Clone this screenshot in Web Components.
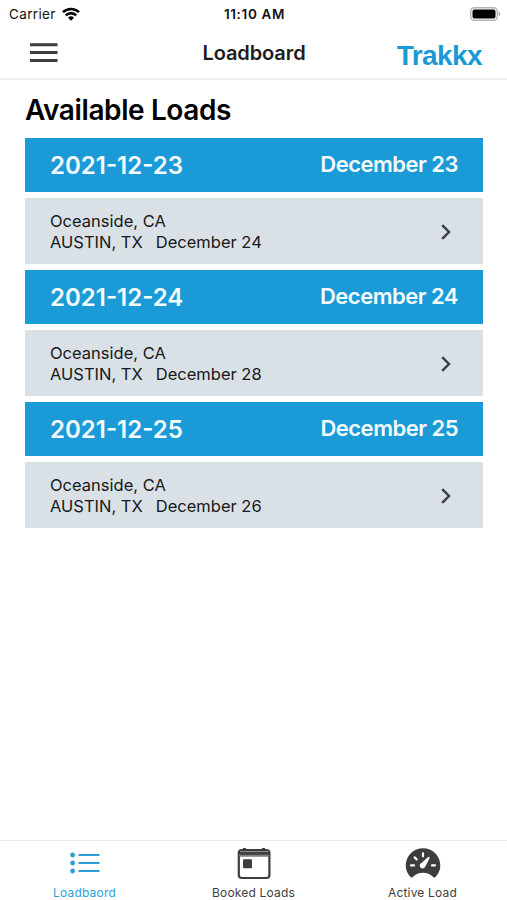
<!DOCTYPE html>
<html lang="en">
<head>
<meta charset="utf-8">
<meta name="viewport" content="width=device-width, initial-scale=1">
<title>Loadboard</title>
<style>
	html, body {
		margin: 0;
		height: 100%;
		background: #fff;
		overflow: hidden;
	}
</style>
</head>
<body>
<trakkx-app></trakkx-app>

<script>
class StatusBar extends HTMLElement {
	constructor() {
		super();
		this.attachShadow({ mode: "open" });
	}

	connectedCallback() {
		this.shadowRoot.innerHTML = `
			<style>
				:host {
					display: grid;
					grid-template-columns: 1fr auto 1fr;
					align-items: center;
					height: 27px;
					padding: 0 6px 1px 9px;
					font-size: 13.5px;
					color: #111;
				}
				.carrier { display: flex; align-items: center; gap: 6px; letter-spacing: 0.35px; }
				.time { font-weight: 600; letter-spacing: 0.65px; padding-right: 1px; }
				.battery { justify-self: end; }
				svg { display: block; }
			</style>
			<div class="carrier">
				<span>Carrier</span>
				<svg width="18" height="14" viewBox="0 0 18 14" fill="none" stroke="#000" stroke-width="2.5">
					<path d="M1 5.2a11.4 11.4 0 0 1 16 0M3.8 8.4a7.4 7.4 0 0 1 10.4 0" />
					<path d="M9 13.800l-3-3.100a4.300 4.300 0 0 1 6 0z" fill="#000" stroke="none" />
				</svg>
			</div>
			<div class="time">11:10 AM</div>
			<svg class="battery" width="31" height="14" viewBox="0 0 31 14">
				<rect x="0.7" y="0.7" width="26.6" height="12.6" rx="3.8" fill="#fff" stroke="#b3b3b3" stroke-width="1.4" />
				<rect x="2.5" y="2.5" width="23" height="9" rx="2" />
				<path d="M28.6 4.8q1.8.6 1.8 2.2t-1.8 2.2z" fill="#aaa" />
			</svg>
		`;
	}
}

class NavBar extends HTMLElement {
	constructor() {
		super();
		this.attachShadow({ mode: "open" });
	}

	connectedCallback() {
		this.shadowRoot.innerHTML = `
			<style>
				:host {
					display: grid;
					grid-template-columns: 1fr auto 1fr;
					align-items: center;
					height: 50px;
					padding: 0 25px 0 30px;
					border-bottom: 2px solid #ececec;
				}
				svg { display: block; }
				.title {
					font-size: 20px;
					font-weight: 600;
					letter-spacing: -0.1px;
					color: #1c1c1e;
					padding-right: 4px;
				}
				.brand {
					justify-self: end;
					font: bold 28px/32px "Liberation Sans", Arial, sans-serif;
					letter-spacing: -0.6px;
					color: #1a99d5;
					padding-top: 6px;
				}
			</style>
			<svg width="28" height="20" viewBox="0 0 28 20" fill="#3c3c3c">
				<path d="M0 .2h27.500v3h-27.500zM0 8.100h27.500v3h-27.500zM0 16h27.500v3h-27.500z" />
			</svg>
			<div class="title"><slot></slot></div>
			<div class="brand">Trakkx</div>
		`;
	}
}

class LoadGroup extends HTMLElement {
	constructor() {
		super();
		this.attachShadow({ mode: "open" });
	}

	connectedCallback() {
		this.shadowRoot.innerHTML = `
			<style>
				:host { display: grid; gap: 6px; }
				header {
					display: flex;
					justify-content: space-between;
					height: 54px;
					box-sizing: border-box;
					padding: 0 25px;
					background: #1a9ad6;
					color: #f4fbff;
				}
				.date { font-size: 24px; font-weight: 600; line-height: 56px; }
				.day { font-size: 22px; font-weight: 600; line-height: 53px; letter-spacing: -0.5px; }
			</style>
			<header>
				<span class="date">${this.getAttribute("date")}</span>
				<span class="day">${this.getAttribute("day")}</span>
			</header>
			<slot></slot>
		`;
	}
}

class LoadItem extends HTMLElement {
	constructor() {
		super();
		this.attachShadow({ mode: "open" });
	}

	connectedCallback() {
		this.shadowRoot.innerHTML = `
			<style>
				:host {
					display: flex;
					align-items: center;
					justify-content: space-between;
					height: 66px;
					box-sizing: border-box;
					padding: 1px 31px 0 25px;
					background: #d9e0e6;
					color: #16181a;
					font-size: 16.5px;
					line-height: 21px;
				}
				.drop { display: flex; gap: 13px; }
				svg { display: block; }
			</style>
			<div>
				<div class="from">${this.getAttribute("from")}</div>
				<div class="drop">
					<span class="to">${this.getAttribute("to")}</span>
					<span class="arrives">${this.getAttribute("arrives")}</span>
				</div>
			</div>
			<svg width="11" height="16" viewBox="0 0 11 16" fill="none" stroke="#3a3e42" stroke-width="2.4">
				<path d="M1.200 1.200L8 8L1.200 14.800" />
			</svg>
		`;
	}
}

const TAB_ICONS = {
	list: `
		<circle cx="5.600" cy="9" r="2.400" /><circle cx="5.600" cy="17" r="2.400" /><circle cx="5.600" cy="25" r="2.400" />
		<path d="M11.500 7.900h21v2.200h-21zM11.500 15.900h21v2.200h-21zM11.500 23.900h21v2.200h-21z" />`,
	calendar: `
		<rect x="2.800" y="4" width="30.600" height="28" rx="3" fill="none" stroke="currentColor" stroke-width="2.200" />
		<path d="M3 4.500h30v6h-30z" />
		<path d="M4 5.600h28.500M3 9.300h30" stroke="#aaa" stroke-width=".8" />
		<path d="M7 2h3v2h-3zM26 2h3v2h-3z" />
		<rect x="7" y="13.300" width="9" height="9" rx="1" />`,
	gauge: `
		<path d="M5.800 31.300C2.700 28.200.7 24.200.7 19.500a17.300 17.300 0 0 1 34.600 0C35.300 24.200 33.300 28.200 30.200 31.300Q28.600 32 27.400 30.300C22 25.700 14 25.700 8.600 30.300Q7.400 32 5.800 31.300z" />
		<path d="M6 19.400h3M27 19.400h3M9.600 11.400l2 2M18 7.300v3" fill="none" stroke="#fff" stroke-width="2.200" stroke-linecap="round" />
		<path d="M24.300 11.300a.8.8 0 0 0-1.200-.2L16.400 16.900a2.900 2.900 0 1 0 3.900 3.700L24.500 12.600a1 1 0 0 0-.2-1.300z" fill="#fff" />`,
};

class TabButton extends HTMLElement {
	constructor() {
		super();
		this.attachShadow({ mode: "open" });
	}

	connectedCallback() {
		this.shadowRoot.innerHTML = `
			<style>
				:host {
					display: flex;
					flex-direction: column;
					align-items: center;
					padding-top: 5px;
					color: #3d3d3d;
					font-size: 12px;
					line-height: 16px;
					letter-spacing: 0.18px;
				}
				:host([active]) { color: #2b9fd4; }
				svg { display: block; margin-bottom: 4px; }
			</style>
			<svg width="36" height="35" viewBox="0 0 36 35" fill="currentColor">${TAB_ICONS[this.getAttribute("icon")]}</svg>
			<span><slot></slot></span>
		`;
	}
}

class TrakkxApp extends HTMLElement {
	constructor() {
		super();
		this.attachShadow({ mode: "open" });
	}

	connectedCallback() {
		this.shadowRoot.innerHTML = `
			<style>
				:host {
					display: flex;
					flex-direction: column;
					height: 100vh;
					background: #fff;
					color: #000;
					font-family: Inter, "Liberation Sans", sans-serif;
				}
				main {
					flex: 1;
					padding: 0 24px 0 25px;
				}
				h1 {
					margin: 0;
					padding: 13px 0 11px;
					font-size: 28px;
					font-weight: 600;
					line-height: 34px;
					letter-spacing: -0.4px;
				}
				.loads { display: grid; gap: 6px; }
				nav {
					display: grid;
					grid-template-columns: repeat(3, 1fr);
					height: 59px;
					border-top: 1px solid #ebebeb;
				}
			</style>
			<status-bar></status-bar>
			<nav-bar>Loadboard</nav-bar>
			<main>
				<h1>Available Loads</h1>
				<div class="loads">
					<load-group date="2021-12-23" day="December 23">
						<load-item from="Oceanside, CA" to="AUSTIN, TX" arrives="December 24"></load-item>
					</load-group>
					<load-group date="2021-12-24" day="December 24">
						<load-item from="Oceanside, CA" to="AUSTIN, TX" arrives="December 28"></load-item>
					</load-group>
					<load-group date="2021-12-25" day="December 25">
						<load-item from="Oceanside, CA" to="AUSTIN, TX" arrives="December 26"></load-item>
					</load-group>
				</div>
			</main>
			<nav>
				<tab-button icon="list" active>Loadbaord</tab-button>
				<tab-button icon="calendar">Booked Loads</tab-button>
				<tab-button icon="gauge">Active Load</tab-button>
			</nav>
		`;
	}
}

customElements.define("status-bar", StatusBar);
customElements.define("nav-bar", NavBar);
customElements.define("load-group", LoadGroup);
customElements.define("load-item", LoadItem);
customElements.define("tab-button", TabButton);
customElements.define("trakkx-app", TrakkxApp);
</script>
</body>
</html>
